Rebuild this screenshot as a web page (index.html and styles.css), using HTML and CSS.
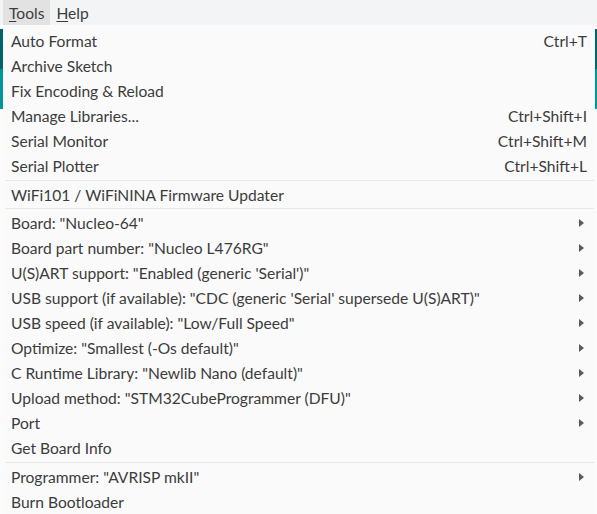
FILE: index.html
```html
<!DOCTYPE html>
<html>
<head>
<meta charset="utf-8">
<link rel="stylesheet" href="styles.css">
</head>
<body>
<div class="app">
  <div class="menubar">
    <div class="mb-item active"><u>T</u>ools</div>
    <div class="mb-item"><u>H</u>elp</div>
  </div>
  <div class="below">
    <div class="edge-left">
      <div class="bar-dark"></div>
      <div class="bar-light"></div>
    </div>
    <div class="menu">
      <div class="row"><span>Auto Format</span><span class="sc">Ctrl+T</span></div>
      <div class="row"><span>Archive Sketch</span></div>
      <div class="row"><span>Fix Encoding &amp; Reload</span></div>
      <div class="row"><span>Manage Libraries...</span><span class="sc">Ctrl+Shift+I</span></div>
      <div class="row"><span>Serial Monitor</span><span class="sc">Ctrl+Shift+M</span></div>
      <div class="row"><span>Serial Plotter</span><span class="sc">Ctrl+Shift+L</span></div>
      <div class="sep sep-wide"></div>
      <div class="row"><span>WiFi101 / WiFiNINA Firmware Updater</span></div>
      <div class="sep"></div>
      <div class="row"><span>Board: "Nucleo-64"</span><span class="arrow"></span></div>
      <div class="row"><span>Board part number: "Nucleo L476RG"</span><span class="arrow"></span></div>
      <div class="row"><span>U(S)ART support: "Enabled (generic 'Serial')"</span><span class="arrow"></span></div>
      <div class="row"><span>USB support (if available): "CDC (generic 'Serial' supersede U(S)ART)"</span><span class="arrow"></span></div>
      <div class="row"><span>USB speed (if available): "Low/Full Speed"</span><span class="arrow"></span></div>
      <div class="row"><span>Optimize: "Smallest (-Os default)"</span><span class="arrow"></span></div>
      <div class="row"><span>C Runtime Library: "Newlib Nano (default)"</span><span class="arrow"></span></div>
      <div class="row"><span>Upload method: "STM32CubeProgrammer (DFU)"</span><span class="arrow"></span></div>
      <div class="row"><span>Port</span><span class="arrow"></span></div>
      <div class="row"><span>Get Board Info</span></div>
      <div class="sep sep-wide"></div>
      <div class="row"><span>Programmer: "AVRISP mkII"</span><span class="arrow"></span></div>
      <div class="row"><span>Burn Bootloader</span></div>
    </div>
    <div class="edge-right">
      <div class="bar-dark"></div>
      <div class="bar-light"></div>
    </div>
  </div>
</div>
</body>
</html>
```
FILE: styles.css
```css
* { box-sizing: border-box; }
html, body { margin: 0; padding: 0; }
body {
  width: 597px;
  height: 514px;
  overflow: hidden;
  background: #ffffff;
  font-family: Lato, "Open Sans", sans-serif;
  font-size: 15.6px;
  color: #3c3c3c;
}
.app { display: flex; flex-direction: column; height: 514px; }
.menubar {
  height: 28px;
  background: #f3f4f6;
  display: flex;
  align-items: flex-end;
  padding-left: 3px;
}
.mb-item {
  height: 25px;
  line-height: 27px;
  padding: 0 6px;
}
.mb-item.active { background: #e2e2e2; }
.mb-item u { text-decoration: underline; text-underline-offset: 2px; }
.below { display: flex; flex: 1; }
.edge-left { width: 4px; padding-top: 4px; background: #fbfbfb; }
.edge-right { width: 2px; padding-top: 4px; background: #fbfbfb; }
.bar-dark { height: 40px; background: #006468; }
.bar-light { height: 40px; background: #00979c; }
.edge-left .bar-dark, .edge-left .bar-light { width: 3px; }
.menu {
  flex: 1;
  background: #fafafa;
  padding-top: 3px;
  display: flex;
  flex-direction: column;
}
.row {
  height: 25px;
  display: flex;
  align-items: center;
  justify-content: space-between;
  padding: 1px 8px 0 7px;
}
.arrow {
  width: 0; height: 0;
  border-top: 4px solid transparent;
  border-bottom: 4px solid transparent;
  border-left: 5px solid #5a5a5a;
  margin-right: 3px;
}
.sep {
  height: 1px;
  background: #e8e8e8;
  margin: 1px;
}
.sep-wide { margin-top: 2px; }
```
